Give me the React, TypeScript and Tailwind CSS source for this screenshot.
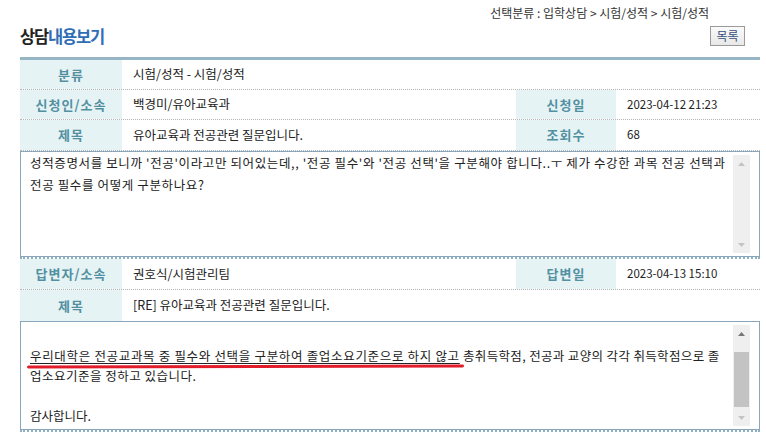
import React from "react";

const Label = ({ children }: { children: React.ReactNode }) => (
  <div className="flex items-center justify-center bg-[#e6f3f4] font-bold text-[13px] tracking-[1px] text-[#5290a2]">
    {children}
  </div>
);

const Val = ({ children, date }: { children: React.ReactNode; date?: boolean }) => (
  <div
    className={
      "flex items-center pl-[11px] text-[#222] " +
      (date ? "text-[11.5px] tracking-[0px]" : "text-[12.5px]")
    }
  >
    {children}
  </div>
);

const Scrollbar = ({ thumb }: { thumb?: boolean }) => (
  <div className="w-[17px] flex flex-col bg-[#efefef] my-[3px] mr-[9px]">
    <div className="h-[17px] flex items-center justify-center">
      <svg width="7" height="4" viewBox="0 0 7 4">
        <path d="M0 4 L3.5 0 L7 4 Z" fill={thumb ? "#777" : "#c4c4c4"} />
      </svg>
    </div>
    <div className="flex-1 flex flex-col">
      {thumb ? <div className="mt-[10px] h-[55px] mx-[1px] bg-[#c3c3c3]" /> : null}
    </div>
    <div className="h-[17px] flex items-center justify-center">
      <svg width="7" height="4" viewBox="0 0 7 4">
        <path d="M0 0 L3.5 4 L7 0 Z" fill="#c4c4c4" />
      </svg>
    </div>
  </div>
);

export default function App() {
  return (
    <div className="w-[766px] h-[439px] bg-white overflow-hidden font-['Noto_Sans_CJK_KR',sans-serif] text-[12px] text-[#222]">
      <div className="h-[26px] flex items-center justify-end pr-[57px] text-[12px] text-[#333]">
        선택분류 : 입학상담 &gt; 시험/성적 &gt; 시험/성적
      </div>
      <div className="h-[31px] flex items-start justify-between pl-[20px] pr-[21px]">
        <div className="text-[16.5px] font-bold tracking-[-1.2px] leading-[20px]">
          <span className="text-[#222]">상담</span>
          <span className="text-[#2f6db5]">내용보기</span>
        </div>
        <button className="w-[35px] h-[20px] border border-[#9a9a9a] bg-gradient-to-b from-[#fafafa] to-[#e8e8e8] text-[12px] leading-[18px] text-[#34507a]">
          목록
        </button>
      </div>
      <div className="ml-[20px] w-[740px] border-t-[3px] border-[#96b5c5]">
        <div className="grid grid-cols-[102px_394px_100px_144px] h-[30px] border-b border-dotted border-[#b5b5b5]">
          <Label>분류</Label>
          <div className="col-span-3 flex items-center pl-[11px] text-[12.5px]">시험/성적 - 시험/성적</div>
        </div>
        <div className="grid grid-cols-[102px_394px_100px_144px] h-[30px] border-b border-dotted border-[#b5b5b5]">
          <Label>신청인/소속</Label>
          <Val>백경미/유아교육과</Val>
          <Label>신청일</Label>
          <Val date>2023-04-12 21:23</Val>
        </div>
        <div className="grid grid-cols-[102px_394px_100px_144px] h-[31px] border-b border-dotted border-[#b5b5b5]">
          <Label>제목</Label>
          <Val>유아교육과 전공관련 질문입니다.</Val>
          <Label>조회수</Label>
          <Val date>68</Val>
        </div>
        <div className="border-b-2 border-dotted border-[#8fb0bf]">
          <div className="h-[106px] border border-[#8aa6bd] flex">
            <div className="flex-1 pl-[9px] text-[12.5px] leading-[22px] tracking-[0.63px] text-[#222] whitespace-nowrap">
              <div>성적증명서를 보니까 '전공'이라고만 되어있는데,, '전공 필수'와 '전공 선택'을 구분해야 합니다..ㅜ 제가 수강한 과목 전공 선택과</div>
              <div>전공 필수를 어떻게 구분하나요?</div>
            </div>
            <Scrollbar />
          </div>
        </div>
        <div className="grid grid-cols-[102px_394px_100px_144px] h-[31px] border-b border-dotted border-[#b5b5b5]">
          <Label>답변자/소속</Label>
          <Val>권호식/시험관리팀</Val>
          <Label>답변일</Label>
          <Val date>2023-04-13 15:10</Val>
        </div>
        <div className="grid grid-cols-[102px_638px] h-[31px]">
          <Label>제목</Label>
          <Val>[RE] 유아교육과 전공관련 질문입니다.</Val>
        </div>
        <div className="border-b-2 border-dotted border-[#8fb0bf]">
          <div className="h-[109px] border border-[#8aa6bd] flex">
            <div className="flex-1 pl-[9px] pt-[4px] text-[12.5px] leading-[20px] text-[#222] whitespace-nowrap">
              <div>&nbsp;</div>
              <div>
                <span className="relative underline underline-offset-[2px] tracking-[0.68px]">
                  우리대학은 전공교과목 중 필수와 선택을 구분하여 졸업소요기준으로 하지 않고
                  <span className="absolute left-[-3px] right-[-4px] bottom-[-3px] h-[3px] rounded-full bg-[#e21d2b] -rotate-[0.15deg]" />
                </span>
                <span className="tracking-[0.35px]"> 총취득학점, 전공과 교양의 각각 취득학점으로 졸</span>
              </div>
              <div className="tracking-[0.5px]">업소요기준을 정하고 있습니다.</div>
              <div>&nbsp;</div>
              <div>감사합니다.</div>
            </div>
            <Scrollbar thumb />
          </div>
        </div>
      </div>
    </div>
  );
}
